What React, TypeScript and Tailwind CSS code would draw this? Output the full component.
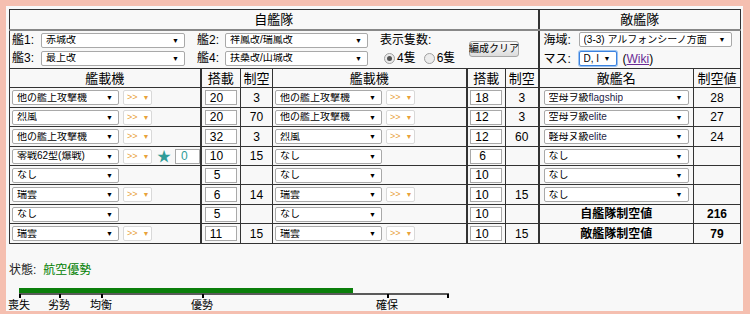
import React from "react";

type Slot = { plane: string; prof: boolean; star?: boolean; load: string; air: string };
type Enemy = { name: string; tag?: string; air: string } | { total: string; value: string };

interface RowData {
  h: string;
  a: Slot;
  b: Slot;
  e: Enemy;
}

const rows: RowData[] = [
  {
    h: "h-[20px]",
    a: { plane: "他の艦上攻撃機", prof: true, load: "20", air: "3" },
    b: { plane: "他の艦上攻撃機", prof: true, load: "18", air: "3" },
    e: { name: "空母ヲ級", tag: "flagship", air: "28" },
  },
  {
    h: "h-[19px]",
    a: { plane: "烈風", prof: true, load: "20", air: "70" },
    b: { plane: "他の艦上攻撃機", prof: true, load: "12", air: "3" },
    e: { name: "空母ヲ級", tag: "elite", air: "27" },
  },
  {
    h: "h-[20px]",
    a: { plane: "他の艦上攻撃機", prof: true, load: "32", air: "3" },
    b: { plane: "烈風", prof: true, load: "12", air: "60" },
    e: { name: "軽母ヌ級", tag: "elite", air: "24" },
  },
  {
    h: "h-[19px]",
    a: { plane: "零戦62型(爆戦)", prof: true, star: true, load: "10", air: "15" },
    b: { plane: "なし", prof: false, load: "6", air: "" },
    e: { name: "なし", air: "" },
  },
  {
    h: "h-[19px]",
    a: { plane: "なし", prof: false, load: "5", air: "" },
    b: { plane: "なし", prof: false, load: "10", air: "" },
    e: { name: "なし", air: "" },
  },
  {
    h: "h-[20px]",
    a: { plane: "瑞雲", prof: true, load: "6", air: "14" },
    b: { plane: "瑞雲", prof: true, load: "10", air: "15" },
    e: { name: "なし", air: "" },
  },
  {
    h: "h-[19px]",
    a: { plane: "なし", prof: false, load: "5", air: "" },
    b: { plane: "なし", prof: false, load: "10", air: "" },
    e: { total: "自艦隊制空値", value: "216" },
  },
  {
    h: "h-[20px]",
    a: { plane: "瑞雲", prof: true, load: "11", air: "15" },
    b: { plane: "瑞雲", prof: true, load: "10", air: "15" },
    e: { total: "敵艦隊制空値", value: "79" },
  },
];

const cell = "border border-[#333] p-0";

function Sel({ w, children, focus }: { w: string; children: React.ReactNode; focus?: boolean }) {
  return (
    <div
      className={`flex items-center justify-between shrink-0 h-[15px] bg-white rounded-[2px] pl-[4px] pr-[5px] text-[10px] leading-none whitespace-nowrap ${w} ${
        focus ? "border border-[#3b82e0] shadow-[0_0_0_1px_#9cc3f0]" : "border border-[#a9a9a9]"
      }`}
    >
      <span className="overflow-hidden">{children}</span>
      <span className="text-[7px] ml-1">▼</span>
    </div>
  );
}

function Prof() {
  return (
    <div className="flex items-center gap-[5px] shrink-0 h-[15px] w-[29px] bg-white border border-[#d9d9d9] rounded-[2px] pl-[3px] text-[9px] leading-none text-[#e8a23a]">
      <span>&gt;&gt;</span>
      <span className="text-[7px]">▼</span>
    </div>
  );
}

function Num({ v }: { v: string }) {
  return (
    <div
      className={`mx-auto h-[15px] w-[32px] bg-white border border-[#a9a9a9] flex items-center text-[12px] leading-none ${
        v.length === 1 ? "pl-[8px]" : "pl-[4px]"
      }`}
    >
      {v}
    </div>
  );
}

function SlotCells({ s, left }: { s: Slot; left: boolean }) {
  return (
    <>
      <td className={`${cell} border-r-2`}>
        <div className="flex items-center gap-[4px] pl-[2px]">
          <Sel w="w-[107px]">{s.plane}</Sel>
          {s.prof && <Prof />}
          {s.star && (
            <>
              <span className="text-[#2f9c98] text-[14px] leading-none ml-[1px]">★</span>
              <div className="h-[15px] w-[28px] bg-white border border-[#a9a9a9] flex items-center pl-[5px] text-[12px] leading-none text-[#2f9c98]">
                0
              </div>
            </>
          )}
        </div>
      </td>
      <td className={cell}>
        <Num v={s.load} />
      </td>
      <td className={`${cell} text-center text-[12px] ${left ? "" : "border-r-2"}`}>{s.air}</td>
    </>
  );
}

function Radio({ on }: { on: boolean }) {
  return (
    <span className="inline-flex items-center justify-center shrink-0 w-[11px] h-[11px] rounded-full border border-[#a0a0a0] bg-[#ececec]">
      {on && <span className="w-[5px] h-[5px] rounded-full bg-[#555]" />}
    </span>
  );
}

const ticks = [
  { x: "left-[0px]", t: "喪失" },
  { x: "left-[40px]", t: "劣勢" },
  { x: "left-[82px]", t: "均衡" },
  { x: "left-[183px]", t: "優勢" },
  { x: "left-[368px]", t: "確保" },
  { x: "left-[428px]", t: "" },
];

export default function App() {
  return (
    <div className="w-[750px] h-[314px] bg-[#f5bfb0] pt-[6px] pl-[6px] pr-[7px] pb-[3px] overflow-hidden font-['Liberation_Sans','Noto_Sans_CJK_JP',sans-serif] text-black">
      <div className="h-full bg-[#f8f8f8] p-[3px]">
        <table className="border-collapse table-fixed w-[731px] bg-[#f8f8f8] leading-none">
          <colgroup>
            <col className="w-[191px]" />
            <col className="w-[40px]" />
            <col className="w-[32px]" />
            <col className="w-[194px]" />
            <col className="w-[39px]" />
            <col className="w-[33px]" />
            <col className="w-[155px]" />
            <col className="w-[47px]" />
          </colgroup>
          <tbody>
            <tr className="h-[20px]">
              <td colSpan={6} className={`${cell} border-r-2 border-b-2 border-b-[#888] text-center text-[13px]`}>
                自艦隊
              </td>
              <td colSpan={2} className={`${cell} border-b-2 border-b-[#888] text-center text-[13px]`}>
                敵艦隊
              </td>
            </tr>
            <tr className="h-[39px]">
              <td colSpan={6} className={`${cell} border-r-2`}>
                <div className="flex items-center pl-[2px] text-[12px]">
                  <div className="flex flex-col gap-[3px] shrink-0">
                    <div className="flex items-center">
                      <span className="w-[29px] shrink-0">艦1:</span>
                      <Sel w="w-[144px]">赤城改</Sel>
                    </div>
                    <div className="flex items-center">
                      <span className="w-[29px] shrink-0">艦3:</span>
                      <Sel w="w-[144px]">最上改</Sel>
                    </div>
                  </div>
                  <div className="flex flex-col gap-[3px] ml-[12px] shrink-0">
                    <div className="flex items-center">
                      <span className="w-[28px] shrink-0">艦2:</span>
                      <Sel w="w-[143px]">祥鳳改/瑞鳳改</Sel>
                    </div>
                    <div className="flex items-center">
                      <span className="w-[28px] shrink-0">艦4:</span>
                      <Sel w="w-[143px]">扶桑改/山城改</Sel>
                    </div>
                  </div>
                  <div className="flex flex-col gap-[3px] ml-[12px] w-[89px] shrink-0">
                    <span className="leading-[15px] whitespace-nowrap">表示隻数:</span>
                    <div className="flex items-center h-[15px] pl-[4px] whitespace-nowrap">
                      <Radio on={true} />
                      <span className="ml-[2px]">4隻</span>
                      <span className="ml-[8px] flex">
                        <Radio on={false} />
                      </span>
                      <span className="ml-[2px]">6隻</span>
                    </div>
                  </div>
                  <div className="h-[16px] w-[50px] shrink-0 flex items-center justify-center whitespace-nowrap rounded-[3px] border border-[#a6a6a6] bg-gradient-to-b from-[#fafafa] to-[#dcdcdc] text-[10px] leading-none">
                    編成クリア
                  </div>
                </div>
              </td>
              <td colSpan={2} className={cell}>
                <div className="flex flex-col gap-[4px] pl-[4px] text-[12px]">
                  <div className="flex items-center">
                    <span className="w-[35px] shrink-0">海域:</span>
                    <Sel w="w-[153px]">(3-3) アルフォンシーノ方面</Sel>
                  </div>
                  <div className="flex items-center">
                    <span className="w-[35px] shrink-0">マス:</span>
                    <Sel w="w-[38px]" focus>
                      D, I
                    </Sel>
                    <span className="ml-[6px]">
                      (<span className="text-[#6a2a94] underline">Wiki</span>)
                    </span>
                  </div>
                </div>
              </td>
            </tr>
            <tr className="h-[19px] text-[13px] text-center">
              <td className={`${cell} border-r-2`}>艦載機</td>
              <td className={cell}>搭載</td>
              <td className={cell}>制空</td>
              <td className={`${cell} border-r-2`}>艦載機</td>
              <td className={cell}>搭載</td>
              <td className={`${cell} border-r-2`}>制空</td>
              <td className={cell}>敵艦名</td>
              <td className={cell}>制空値</td>
            </tr>
            {rows.map((r, i) => (
              <tr key={i} className={r.h}>
                <SlotCells s={r.a} left={true} />
                <SlotCells s={r.b} left={false} />
                {"total" in r.e ? (
                  <>
                    <td className={`${cell} text-center text-[12px] font-bold`}>{r.e.total}</td>
                    <td className={`${cell} text-center text-[12px] font-bold`}>{r.e.value}</td>
                  </>
                ) : (
                  <>
                    <td className={cell}>
                      <div className="pl-[4px]">
                        <Sel w="w-[145px]">
                          {r.e.name}
                          {r.e.tag && <span className="text-[#1e1e48]">{r.e.tag}</span>}
                        </Sel>
                      </div>
                    </td>
                    <td className={`${cell} text-center text-[12px]`}>{r.e.air}</td>
                  </>
                )}
              </tr>
            ))}
          </tbody>
        </table>

        <div className="mt-[19px] text-[12px] leading-[14px]">
          <span className="text-[#222]">状態:</span>
          <span className="ml-[7px] text-[#008000]">航空優勢</span>
        </div>

        <div className="relative ml-[10px] mt-[11px] w-[430px] h-[22px]">
          <div className="h-[5px] w-[334px] bg-[#0b7f0b]" />
          <div className="h-[2px] w-[430px] bg-[#5a5a5a]" />
          {ticks.map((k, i) => (
            <div key={i} className={`absolute top-[6px] w-[2px] h-[4px] bg-black ${k.x}`} />
          ))}
          {ticks
            .filter((k) => k.t)
            .map((k, i) => (
              <span
                key={i}
                className={`absolute top-[11px] -translate-x-1/2 text-[11px] leading-[12px] whitespace-nowrap ${k.x}`}
              >
                {k.t}
              </span>
            ))}
        </div>
      </div>
    </div>
  );
}
